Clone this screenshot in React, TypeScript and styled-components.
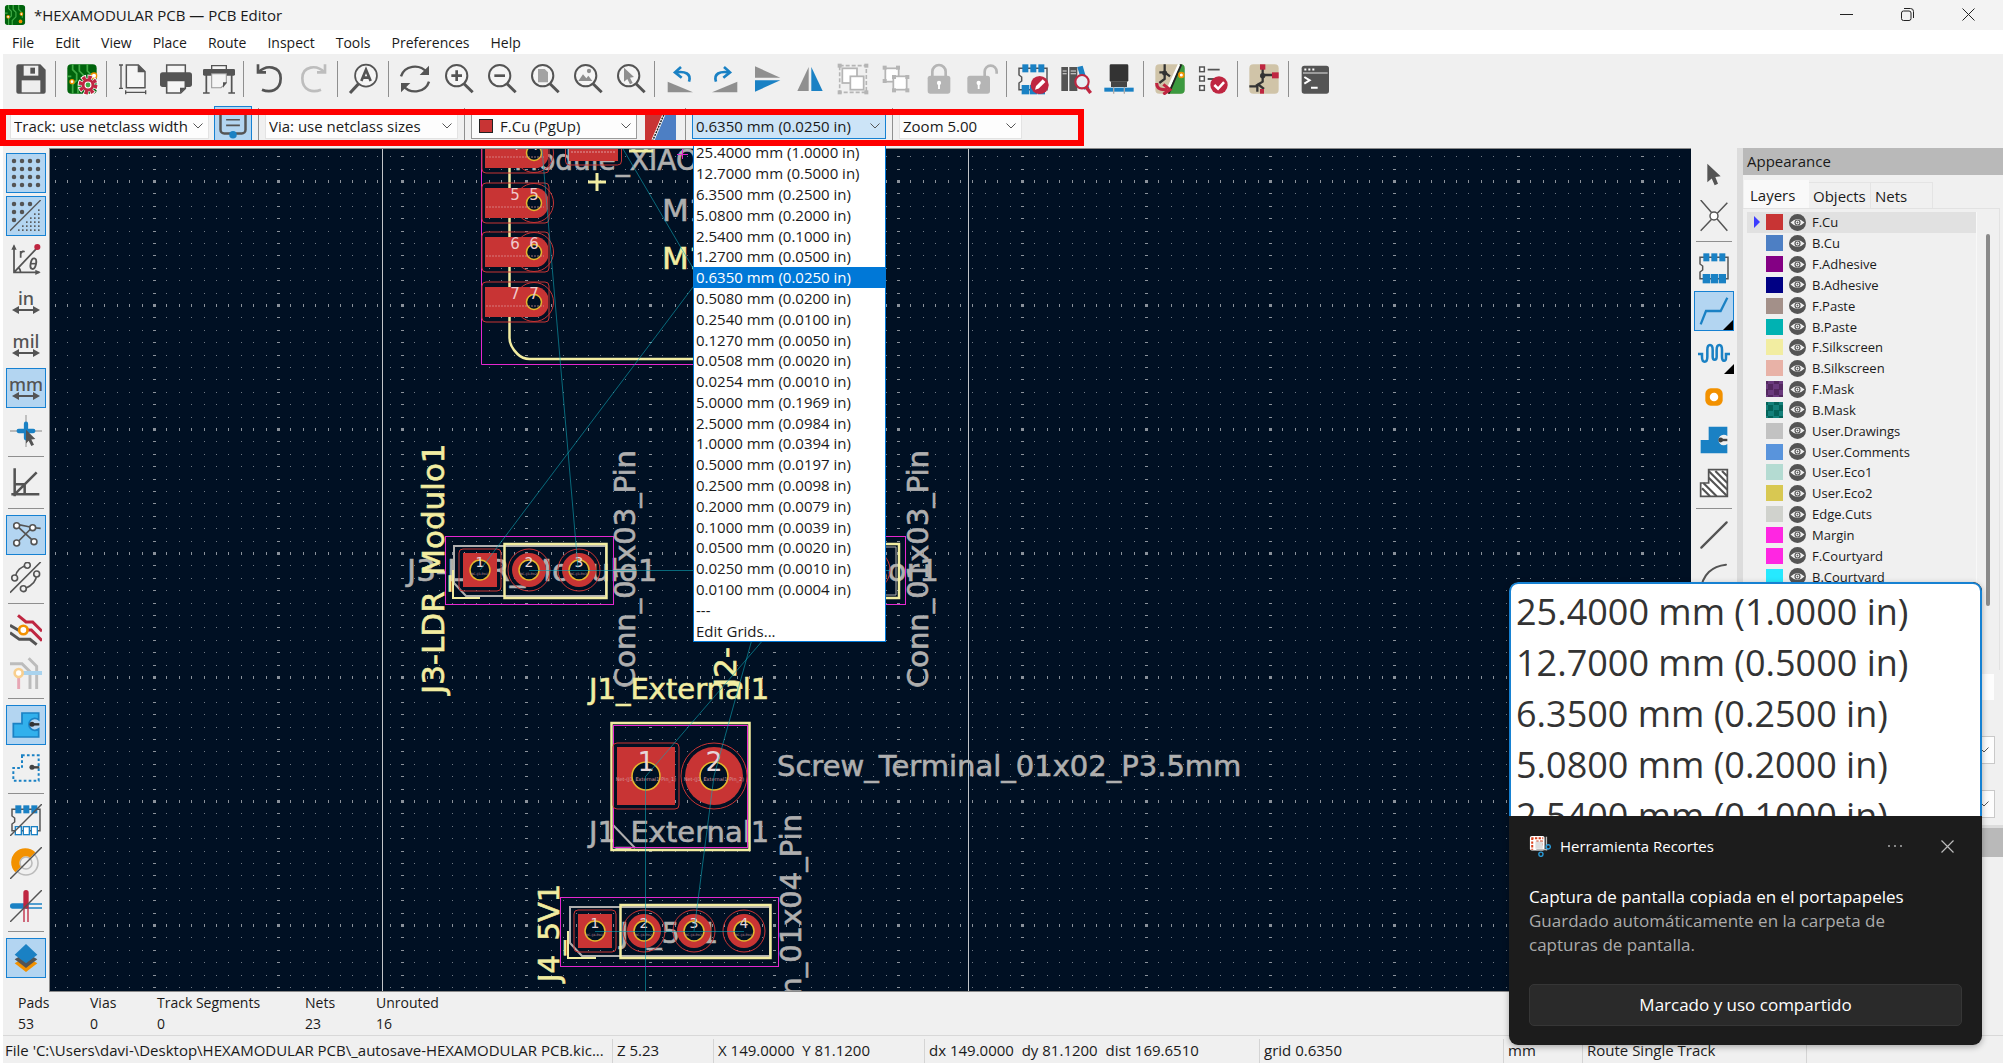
import React from 'react';
import styled, { createGlobalStyle, css } from 'styled-components';

const GlobalStyle = createGlobalStyle`
  * { box-sizing: border-box; }
  html, body { margin: 0; padding: 0; }
  body {
    font-family: 'Open Sans', 'Noto Sans', 'Liberation Sans', sans-serif;
    font-size: 15px;
    color: #1a1a1a;
    background: #fff;
    overflow: hidden;
  }
  button, select, input { font: inherit; color: inherit; }
`;

const BLUE = '#1a81c4';
const INK = '#545454';
const RED = '#bf2641';
const ORANGE = '#f29100';

/* ---------- icons (24 unit grid) ---------- */

const s = { fill: 'none', stroke: INK, strokeWidth: 1.5 } as const;

const mag = (
  <>
    <circle cx="11" cy="9.5" r="8" {...s} strokeWidth={1.5} fill="#f5f5f5" />
    <path d="M16.5 15.5L23 22" {...s} strokeWidth={2.2} />
  </>
);

const board = (
  <>
    <rect x="1" y="1" width="22" height="22" rx="3" fill="#00630c" />
    <path d="M5 1v4l3 3v5l-3 3v7M10 1v5l3 3v5l-4 4v5M16 1v5l4 4v5M1 10h3" fill="none" stroke="#3faa45" strokeWidth="1.3" />
    <circle cx="4.500" cy="14" r="2" fill={ORANGE} /><circle cx="4.500" cy="14" r="1" fill="#fff" />
  </>
);

const footprint = (top: string) => (
  <>
    <path d="M3 4H1.500v5l2 1.500v3L1.500 15v5H22.500V4z" {...s} strokeWidth={1.1} />
    {[4, 10, 16].map((x) => (
      <React.Fragment key={x}>
        <rect x={x} y="1" width="4.500" height="6" fill={BLUE} />
        <rect x={x} y="17" width="4.500" height="6" fill={top} stroke={BLUE} strokeWidth="1" />
      </React.Fragment>
    ))}
  </>
);

const lshape = 'M8 2H22V9A4 4 0 1 0 22 15V22H2V12H8z';

const icons: Record<string, React.ReactNode> = {
  app: (
    <>
      {board}
      <circle cx="19" cy="11" r="2" fill={ORANGE} /><circle cx="19" cy="11" r=".9" fill="#fff" />
      <circle cx="18" cy="19" r="2" fill={ORANGE} />
    </>
  ),
  save: (
    <>
      <path d="M1 2.500a1.500 1.500 0 0 1 1.500-1.500H19l4 4v16.500a1.500 1.500 0 0 1-1.500 1.500h-19A1.500 1.500 0 0 1 1 21.500z" fill={INK} />
      <rect x="6.500" y="2" width="11" height="7.500" fill="#eee" />
      <rect x="11.500" y="3.500" width="3.500" height="4.500" fill={INK} />
      <rect x="5" y="13" width="14" height="9" fill="#eee" />
    </>
  ),
  boardSetup: (
    <>
      {board}
      <circle cx="21" cy="9.500" r="2" fill="#fff" stroke={ORANGE} />
      <circle cx="16.500" cy="16.500" r="5" fill="#fff" />
      <circle cx="16.500" cy="16.500" r="5.800" fill="none" stroke="#fff" strokeWidth="4" strokeDasharray="3.600 .955" strokeDashoffset=".5" />
      <circle cx="16.500" cy="16.500" r="5.800" fill="none" stroke={RED} strokeWidth="2.600" strokeDasharray="2.600 1.955" />
      <circle cx="16.500" cy="16.500" r="3.700" fill="none" stroke={RED} strokeWidth="2.200" />
      <circle cx="16.500" cy="16.500" r="1.800" fill="#3faa45" />
    </>
  ),
  page: (
    <>
      <path d="M7 1.500h9l5 5V18.500H7z" fill="#f5f5f5" stroke={INK} strokeWidth="1.100" />
      <path d="M15.500 1.500v5.500h5.500z" fill={INK} />
      <path d="M3 1v18M1.500 1.500h3M1.500 19h3M6 22h16M6.500 20.500v3M21.500 20.500v3" {...s} strokeWidth={1} />
    </>
  ),
  print: (
    <>
      <rect x="5" y="1.500" width="14" height="7" fill="#f5f5f5" stroke={INK} strokeWidth="1.100" />
      <rect x="0" y="7" width="24" height="11" rx="2" fill={INK} />
      <path d="M5 13h14v6l-3.500 3.500H5z" fill="#f5f5f5" stroke={INK} strokeWidth="1.200" />
      <path d="M19 18.500l-4 4v-4z" fill={INK} />
    </>
  ),
  plot: (
    <>
      <path d="M6.500 2h11v3h-11z" fill="#f5f5f5" stroke={INK} strokeWidth="1" />
      <rect x="0" y="4.500" width="24" height="5" rx="1" fill={INK} />
      <path d="M2.500 9v13M21.500 9v13M0 22.500h5M19 22.500h5" {...s} strokeWidth={1.300} />
      <path d="M6.500 8h11v7l-4 3.500h-7z" fill="#f5f5f5" stroke="#999" strokeWidth=".8" />
      <path d="M18 14.500h-3v4z" fill={INK} />
    </>
  ),
  undo: <path d="M3 1v6h6M3.500 7C9 1 20 2 20 11.500S12 22.500 6 20" {...s} strokeWidth={2} />,
  redo: <path d="M21 1v6h-6M20.500 7C15 1 4 2 4 11.500S12 22.500 18 20" {...s} stroke="#bdbdbd" strokeWidth={2} />,
  find: (
    <>
      <circle cx="13.500" cy="9.500" r="8.200" fill="#f5f5f5" stroke={INK} strokeWidth="1.300" />
      <path d="M8 15.500L1.500 22.500" {...s} strokeWidth={2.300} />
      <path d="M10 13.500L13.500 5l3.500 8.500M11 11h5" {...s} strokeWidth={2} />
    </>
  ),
  refresh: (
    <>
      <path d="M1.500 10C4 2 15 0 21 7M22.500 14C20 22 9 24 3 17" {...s} strokeWidth={1.800} />
      <path d="M22.500 2v7h-7z M1.500 22v-7h7z" fill={INK} />
    </>
  ),
  zoomIn: <>{mag}<path d="M11 5.500v8M7 9.500h8" {...s} strokeWidth={2} /></>,
  zoomOut: <>{mag}<path d="M7 9.500h8" {...s} strokeWidth={2} /></>,
  zoomPage: <>{mag}<path d="M7.500 4.500h5l2.500 2.500v7.500H7.500z" fill="#a3a3a3" /></>,
  zoomObj: <>{mag}<path d="M5.500 13.500l3.500-5 2.500 3 1.500-2 3 4z" fill="#8f8f8f" /><circle cx="13.500" cy="6" r="1.600" fill="#8f8f8f" /></>,
  zoomSel: <>{mag}<path d="M7.500 3.500l7.500 7-3 .5 2 4-2 1-2-4-2.500 2z" fill="#8f8f8f" /></>,
  ccw: (
    <>
      <path d="M2 22V14l19 8z" fill="#8f8f8f" />
      <path d="M18 14C20 8 15 6 8.500 7" fill="none" stroke={BLUE} strokeWidth="2" />
      <path d="M12 3L7.500 7l5 4" fill="none" stroke={BLUE} strokeWidth="2" />
    </>
  ),
  cw: (
    <>
      <path d="M22 22V14L3 22z" fill="#8f8f8f" />
      <path d="M6 14C4 8 9 6 15.500 7" fill="none" stroke={BLUE} strokeWidth="2" />
      <path d="M12 3l4.500 4-5 4" fill="none" stroke={BLUE} strokeWidth="2" />
    </>
  ),
  flipV: <><path d="M3 2.500v8.500h19z" fill="#8f8f8f" /><path d="M3 21.500V13h19z" fill={BLUE} /></>,
  flipH: <><path d="M2.500 21H11V3z" fill="#8f8f8f" /><path d="M21.500 21H13V3z" fill={BLUE} /></>,
  group: (
    <>
      <rect x="2" y="2" width="20" height="20" fill="none" stroke="#b5b5b5" strokeWidth="1.200" strokeDasharray="3 1.500" />
      {[[0.5, 0.5], [20.5, 0.5], [0.5, 20.5], [20.5, 20.5]].map(([x, y]) => <rect key={`${x}${y}`} x={x} y={y} width="3" height="3" fill="#b5b5b5" />)}
      <rect x="4" y="4" width="11" height="11" fill="#fff" stroke="#b5b5b5" strokeWidth="1.300" />
      <rect x="10" y="10" width="10" height="10" fill="#fff" stroke="#b5b5b5" strokeWidth="1.300" />
    </>
  ),
  ungroup: (
    <>
      <rect x="4" y="4" width="10" height="10" fill="#fff" stroke="#b5b5b5" strokeWidth="1.300" />
      <rect x="10" y="10" width="10" height="10" fill="#fff" stroke="#b5b5b5" strokeWidth="1.300" />
      {[[2, 2], [12, 2], [2, 12], [19, 9], [9, 19], [19, 19], [9, 9]].map(([x, y]) => <rect key={`${x}-${y}`} x={x} y={y} width="3" height="3" fill="#b5b5b5" />)}
    </>
  ),
  lock: (
    <>
      <path d="M7 10V6.500a5 5 0 0 1 10 0V10" fill="none" stroke="#b5b5b5" strokeWidth="2" />
      <rect x="3.500" y="9.500" width="17" height="13.500" rx="2" fill="#b5b5b5" />
      <path d="M12 14.500v5" stroke="#fff" strokeWidth="1.400" /><circle cx="12" cy="15" r="1.600" fill="#fff" />
    </>
  ),
  unlock: (
    <>
      <path d="M14 10V6.500a4.500 4.500 0 0 1 9 0V8" fill="none" stroke="#b5b5b5" strokeWidth="2" />
      <rect x="1" y="9.500" width="17" height="13.500" rx="2" fill="#b5b5b5" />
      <path d="M9.500 14.500v5" stroke="#fff" strokeWidth="1.400" /><circle cx="9.500" cy="15" r="1.600" fill="#fff" />
    </>
  ),
  fpEdit: (
    <>
      {footprint(BLUE)}
      <circle cx="17" cy="16.500" r="6.800" fill={RED} />
      <path d="M13.500 20l.8-2.800 5-5 2 2-5 5z" fill="#fff" />
    </>
  ),
  library: (
    <>
      <path d="M1 3h5v18H1zM7 3h6v18H7z" fill={INK} />
      <path d="M2 6h3M2 8h3M8 6h4M8 8h4" stroke="#ddd" strokeWidth=".8" />
      <path d="M13 3l4-1 5 17-4 1z" fill={BLUE} />
      <circle cx="16.500" cy="14" r="5" fill="#e6eef5" stroke={RED} strokeWidth="1.600" />
      <path d="M19.500 18l3.500 4.500" stroke={RED} strokeWidth="2.600" />
    </>
  ),
  mill: (
    <>
      <rect x="5" y="1" width="14" height="13" rx="1" fill="#333" />
      <rect x="6" y="14" width="12" height="4" fill="#444" />
      <rect x="1" y="18.500" width="22" height="3" fill={BLUE} />
      <path d="M8 18v5M16 18v5" stroke="#aaa" strokeWidth="1" />
    </>
  ),
  update: (
    <>
      <rect x="1" y="1" width="22" height="22" rx="3" fill="#d0c4a8" />
      <path d="M23 4v16a3 3 0 0 1-3 3H10L19 1h1a3 3 0 0 1 3 3z" fill="#3c9a40" />
      <path d="M8 1v7M4 7h4l4 3M8 7v5l-4 3" {...s} stroke="#333" strokeWidth={1.700} /><circle cx="8" cy="7.500" r="1.900" fill="#333" />
      <path d="M19 1L9 23" stroke="#fff" strokeWidth="2.200" /><path d="M20.500 1L11 23" stroke="#222" strokeWidth="1.400" />
      <circle cx="20.500" cy="9" r="1.800" fill="#fff" stroke={ORANGE} strokeWidth="1.300" />
      <path d="M2 15c0 5 4 5 8 5M7 16l5 4-5 3.500" fill="none" stroke={RED} strokeWidth="2.300" />
    </>
  ),
  drc: (
    <>
      {[3, 10, 17].map((y) => <rect key={y} x="2" y={y} width="3.500" height="3.500" fill="#fff" stroke={INK} strokeWidth="1.100" />)}
      <path d="M8 5h9M8 12h6" {...s} strokeWidth={1.4} />
      <circle cx="16.500" cy="16.500" r="6.500" fill={RED} />
      <path d="M13 16.500l2.800 2.800 4.500-5" fill="none" stroke="#fff" strokeWidth="1.900" />
    </>
  ),
  schematic: (
    <>
      <rect x="1" y="1" width="22" height="22" rx="3" fill="#d0c4a8" />
      <path d="M11 3v6M11 9h9M11 9v5l-5 3M1 17.500h6v4M7 15.500l5 4" fill="none" stroke="#333" strokeWidth="1.700" />
      <circle cx="11" cy="9.500" r="2" fill="#333" />
      <rect x="9" y="1" width="4" height="4" fill={RED} /><rect x="18" y="7" width="5" height="4.500" fill={RED} /><rect x="9" y="19.500" width="3" height="3.500" fill={RED} />
    </>
  ),
  console: (
    <>
      <rect x="2" y="2" width="20.500" height="21" rx="2" fill={INK} />
      <path d="M3 7.500h18.500" stroke="#ddd" strokeWidth=".8" />
      <path d="M4 4.800h1.500M7 4.800h1.500M10 4.800h1.500" stroke="#fff" strokeWidth="1.500" />
      <path d="M4 10.500l4 2.500-4 2.500M9 18.500h5" fill="none" stroke="#fff" strokeWidth="1.500" />
    </>
  ),
  grid: <>{[3, 9, 15, 21].map((x) => [3, 9, 15, 21].map((y) => <circle key={`${x}${y}`} cx={x} cy={y} r="1.700" fill={INK} />))}</>,
  gridFade: (
    <>
      {[[3, 3], [9, 3], [15, 3], [3, 9], [9, 9], [3, 15]].map(([x, y]) => <circle key={`${x}${y}`} cx={x} cy={y} r="1.700" fill={INK} />)}
      <path d="M0 23L23 0" {...s} strokeWidth={1} />
      {[[21, 7], [18, 10], [21, 10], [15, 13], [18, 13], [21, 13], [12, 16], [15, 16], [18, 16], [21, 16], [9, 19], [12, 19], [15, 19], [18, 19], [21, 19], [6, 22], [9, 22], [12, 22], [15, 22], [18, 22], [21, 22]].map(([x, y]) => <rect key={`${x}.${y}`} x={x} y={y} width="1.200" height="1.200" fill={INK} />)}
    </>
  ),
  polar: (
    <>
      <path d="M3 2v20h19M3 22L20 4M8 22a6 6 0 0 0-2-4" {...s} strokeWidth={1.3} />
      <path d="M1 5l2-4 2 4zM19 20l4 2-4 2z" fill={INK} />
      <circle cx="20.500" cy="3" r="2.300" fill={RED} />
      <path d="M8 11V6M8 8c1-2 2-2 3-1.500" {...s} strokeWidth={1.300} />
      <ellipse cx="17.500" cy="15.500" rx="2" ry="4" transform="rotate(12 17.500 15.500)" {...s} strokeWidth={1.4} /><path d="M15.500 15.500h4" {...s} strokeWidth={1.2} />
    </>
  ),
  cursor: (
    <>
      <path d="M12 0v24M0 12h24" stroke="#a9a9a9" strokeWidth="1" />
      <path d="M12 6.500v11M6.500 12h11" stroke={BLUE} strokeWidth="3.200" strokeLinecap="round" />
      <path d="M12 11l7 7-3 .3 2 4-2 1-2-4-2 2z" fill={INK} />
    </>
  ),
  angle: <path d="M3.500 1v21M1 20.500h21M3.500 20.500L20 4M4 13h7v7" {...s} strokeWidth={1.900} />,
  rats: (
    <>
      <path d="M4 4c6 0 10 3 19 3M4 4l14 13M5 18L17 6" {...s} strokeWidth={1.300} />
      {[[5, 5], [17, 6.5], [5, 18], [18, 17]].map(([x, y]) => <circle key={`${x}${y}`} cx={x} cy={y} r="2.200" fill="#fff" stroke={INK} strokeWidth="1.200" />)}
    </>
  ),
  curved: (
    <>
      <path d="M0 23L23 0M4 11C5 6 8 4 13 2M20 9c0 6-4 9-9 11" {...s} strokeWidth={1.200} />
      {[[3.5, 12], [13, 2.5], [20, 9], [10, 20]].map(([x, y]) => <circle key={`${x}${y}`} cx={x} cy={y} r="2.200" fill="#f0f0f0" stroke={INK} strokeWidth="1.200" />)}
    </>
  ),
  netHi: (
    <>
      <path d="M0 8.500l7 4M0 14l7 5h8l5 4" {...s} strokeWidth={2.200} />
      <path d="M6 1l6 5h5l7 7M10 12h6l8 8" fill="none" stroke={RED} strokeWidth="2.200" />
      <circle cx="10" cy="12" r="3.200" fill="#fff" stroke={ORANGE} strokeWidth="2" />
    </>
  ),
  dim: (
    <>
      <path d="M0 5h9l6 6v13M14 1l6 6v17" fill="none" stroke="#bcbcbc" strokeWidth="2.200" />
      <path d="M7 12h17" stroke="#a9d3ee" strokeWidth="3" /><path d="M6.500 13v11" stroke="#e7a6b4" strokeWidth="2.200" />
      <circle cx="6.500" cy="12" r="3" fill="#fff" stroke="#f8cf8e" strokeWidth="2" />
    </>
  ),
  zoneFill: (
    <>
      <path d="M9 3H21.500V8A4.500 4.500 0 1 0 21.500 15V21H2.500V11H9z" fill="#31b0ec" stroke={BLUE} strokeWidth="1.300" />
      <path d="M15 11.500h7" stroke="#333" strokeWidth="1.800" /><circle cx="16.500" cy="11.500" r="1.900" fill="#333" />
    </>
  ),
  zoneOutline: (
    <>
      <path d="M9 2.500H21.500V21.500H2.500V12H9z" fill="none" stroke={BLUE} strokeWidth="1.500" strokeDasharray="2 1.700" />
      <path d="M15 11.500h7" stroke="#444" strokeWidth="1.800" /><circle cx="16.500" cy="11.500" r="1.900" fill="#444" />
    </>
  ),
  padSketch: <>{footprint('#fff')}<path d="M0 24L24 0" {...s} strokeWidth={1.100} /></>,
  viaSketch: (
    <>
      <circle cx="12" cy="12" r="9" fill="none" stroke="#bbb" strokeWidth="1.200" /><circle cx="12" cy="12" r="4.500" fill="none" stroke="#bbb" strokeWidth="1.200" />
      <path d="M4 19A10 10 0 0 1 19 4L15 8a5 5 0 0 0-7 7z" fill={ORANGE} />
      <path d="M0 24L24 0" {...s} strokeWidth={1.100} />
    </>
  ),
  trackSketch: (
    <>
      <path d="M2 12h10" stroke={BLUE} strokeWidth="4" strokeLinecap="round" /><path d="M12 10.500h12M12 13.500h12" stroke={BLUE} strokeWidth="1" />
      <path d="M12 2v10" stroke={RED} strokeWidth="4" strokeLinecap="round" /><path d="M10.500 13v11M13.500 13v11" stroke={RED} strokeWidth="1" />
      <path d="M0 24L24 0" {...s} strokeWidth={1.100} />
    </>
  ),
  layers: (
    <>
      <path d="M3.500 16l8.500 6.500 8.500-6.500-8.500-5z" fill={ORANGE} /><path d="M3.500 13l8.500 6.500 8.500-6.500-8.500-5z" fill={INK} /><path d="M3.500 9.500l8.500-8 8.500 8-8.500 6.500z" fill={BLUE} />
    </>
  ),
  arrow: <path d="M7 5l10 9.500-4 .5 2 5-2.500 1.200-2.200-5L7 19z" fill={INK} />,
  cross: <><path d="M2 0l20 23M22 2L2 23" {...s} strokeWidth={1.100} /><circle cx="12" cy="12" r="3" fill="#fff" stroke={INK} strokeWidth="1.100" /></>,
  footprint: footprint(BLUE),
  track: <path d="M2 22l4-10h11l5-10" fill="none" stroke={BLUE} strokeWidth="1.700" />,
  tune: <path d="M0 12h3v2c0 5 4 5 4 0V9c0-5 4-5 4 0v5c0 3 3 3 3 0V9c0-5 4-5 4 0v5c0 4 3 4 3 1v-3h3" fill="none" stroke={BLUE} strokeWidth="1.900" />,
  via: <><rect x="5.500" y="5.500" width="13" height="13" rx="4" fill={ORANGE} /><circle cx="12" cy="12" r="3.200" fill="#fff" /></>,
  zone: <><path d={lshape} fill={BLUE} /><path d="M17 12h5" stroke="#444" strokeWidth="1.800" /><circle cx="17" cy="12" r="1.800" fill="#444" /></>,
  hatch: (
    <>
      <path d="M8 2H22V22H2V12H8z" fill="#fff" stroke={INK} strokeWidth="1.300" />
      <path d="M8 3l14 14M8 8l14 14M13 3l9 9M18 3l4 4M4 12l10 10M3 16l6 6" {...s} strokeWidth={1.600} />
    </>
  ),
  line: <path d="M2.500 21.500l19-19" {...s} strokeWidth={1.700} strokeLinecap="round" />,
  arc: <path d="M2 22C3 9 11 3 21 2" {...s} strokeWidth={1.500} strokeLinecap="round" />,
  netclass: (
    <>
      <path d="M2 0v15a3 3 0 0 0 3 3h14a3 3 0 0 0 3-3V0" fill="none" stroke={INK} strokeWidth="2" />
      <path d="M6.500 7h11M6.500 11.500h11" {...s} strokeWidth={1.300} /><circle cx="12" cy="19" r="3" fill={BLUE} />
    </>
  ),
  snip: (
    <>
      <rect x="1" y="1" width="16" height="16" rx="2" fill="#fff" />
      <path d="M2.500 3.500h13M3.500 3v13M8 7h6v6H8" fill="none" stroke="#d8401c" strokeWidth="2.200" strokeDasharray="2.500 1.500" />
      <rect x="7" y="7" width="8" height="8" fill="#ddd" />
      <path d="M19 2v15M8 16h12" stroke="#bbb" strokeWidth="1.500" />
      <circle cx="21" cy="13" r="2.300" fill="none" stroke="#2a9bd8" strokeWidth="1.500" /><circle cx="13" cy="21" r="2.300" fill="none" stroke="#2a9bd8" strokeWidth="1.500" />
    </>
  ),
};

const Glyph = ({ name, size = 32 }: { name: string; size?: number }) => (
  <svg width={size} height={size} viewBox="0 0 24 24" aria-hidden="true">{icons[name]}</svg>
);

/* ---------- window frame ---------- */

const Window = styled.div`
  position: relative;
  display: grid;
  grid-template-rows: 30px 24px 54px 40px minmax(0, 1fr) 43px 28px;
  height: 100vh;
`;

const TitleBar = styled.header`
  display: flex;
  align-items: center;
  gap: 8px;
  padding: 0 8px 0 4px;
  background: #f3f3f3;
`;

const Title = styled.h1`
  flex: 1;
  margin: 0;
  font-size: 15px;
  font-weight: 400;
  line-height: 20px;
`;

const WindowButton = styled.button`
  width: 53px;
  height: 30px;
  padding: 0;
  border: 0;
  background: none;
`;

const MenuBar = styled.nav`
  display: flex;
  align-items: center;
  gap: 21px;
  padding: 2px 0 0 12px;
  background: #fff;
`;

const MenuItem = styled.button`
  padding: 0;
  border: 0;
  background: none;
  font-size: 14px;
  line-height: 20px;
`;

const ToolRow = styled.div`
  display: flex;
  align-items: center;
  margin-left: 3px;
  padding: 0 0 4px 6px;
  background: #f0f0f0;
`;

const OptionRow = styled.div`
  display: flex;
  align-items: center;
  margin-left: 3px;
  padding: 0 0 5px 7px;
  background: #f0f0f0;
`;

const ToolButton = styled.button`
  display: grid;
  place-items: center;
  width: 43px;
  height: 40px;
  padding: 0;
  border: 0;
  background: none;
`;

const ToolDivider = styled.span`
  width: 1px;
  height: 36px;
  margin: 0 4px 0 3px;
  background: #8f8f8f;
`;

const OptionDivider = styled.span`
  width: 1px;
  height: 36px;
  margin: 0 6px;
  background: #8f8f8f;
`;

const activeStyle = css`
  border: 1px solid #1681d2;
  background: #b3d5f1;
`;

const ToggleButton = styled.button`
  display: grid;
  place-items: center;
  width: 38px;
  height: 40px;
  margin-left: 5px;
  padding: 0;
  ${activeStyle}
`;

const Combo = styled.label<{ $width: number; $open?: boolean; $outlined?: boolean }>`
  display: flex;
  align-items: center;
  width: ${(p) => p.$width}px;
  height: 26px;
  padding: 0 4px 0 3px;
  background: ${(p) => (p.$open ? '#cce4f7' : '#fdfdfd')};
  border: 1px solid ${(p) => (p.$open ? '#1681d2' : p.$outlined ? '#9a9a9a' : '#e3e3e3')};
`;

const ComboSelect = styled.select`
  flex: 1;
  min-width: 0;
  padding: 0;
  border: 0;
  outline: 0;
  appearance: none;
  background: none;
  font-size: 15px;
  line-height: 20px;
`;

const ColorChip = styled.span`
  width: 14px;
  height: 14px;
  margin: 0 7px 0 4px;
  border: 1px solid #222;
  background: #c83434;
`;

const LayerPair = styled.button`
  width: 31px;
  height: 28px;
  margin: 0 3px 0 8px;
  padding: 0;
  border: 0;
  background: none;
`;

const Chevron = () => (
  <svg width="12" height="8" viewBox="0 0 12 8" aria-hidden="true"><path d="M1.500 1.500l4.500 4.500 4.500-4.500" fill="none" stroke="#555" /></svg>
);

const Highlight = styled.div`
  position: absolute;
  top: 109px;
  left: 0;
  width: 1084px;
  height: 37px;
  border: 6px solid #f00;
  pointer-events: none;
`;

const GridMenu = styled.ul`
  position: absolute;
  top: 141px;
  left: 693px;
  display: grid;
  grid-auto-rows: 1fr;
  width: 193px;
  height: 501px;
  margin: 0;
  padding: 0;
  list-style: none;
  border: 1px solid #0078d7;
  background: #fff;
`;

const GridItem = styled.li<{ $selected: boolean }>`
  display: flex;
  align-items: center;
  padding-left: 2px;
  line-height: 20px;
  white-space: nowrap;
  color: ${(p) => (p.$selected ? '#fff' : '#1a1a1a')};
  background: ${(p) => (p.$selected ? '#0078d7' : 'transparent')};
`;

/* ---------- work area ---------- */

const Work = styled.main`
  display: grid;
  grid-template-columns: 46px minmax(0, 1fr) 46px 6px 260px;
  margin-left: 3px;
  background: #f0f0f0;
`;

const SideBar = styled.div`
  display: flex;
  flex-direction: column;
  align-items: center;
  gap: 3px;
  padding-top: 5px;
  overflow: hidden;
`;

const SideButton = styled.button<{ $active?: boolean }>`
  position: relative;
  display: grid;
  flex: none;
  place-items: center;
  width: 40px;
  height: 40px;
  padding: 0;
  border: 0;
  background: none;
  ${(p) => p.$active && activeStyle}
`;

const SideDivider = styled.span`
  flex: none;
  width: 36px;
  height: 1px;
  margin: 2px 0 3px;
  background: #8f8f8f;
`;

const UnitLabel = styled.span`
  display: flex;
  flex-direction: column;
  align-items: center;
  font-family: 'Noto Sans', sans-serif;
  font-size: 18px;
  font-weight: 500;
  line-height: 16px;
  color: #545454;
`;

const Corner = styled.span`
  position: absolute;
  right: 0;
  bottom: 0;
  border: 5px solid #000;
  border-top-color: transparent;
  border-left-color: transparent;
`;

const Board = styled.section`
  min-width: 0;
  overflow: hidden;
  border: solid #8a8a8a;
  border-width: 1px 0 1px 1px;
  background: #001023;
`;

const Sash = styled.div`
  background: #dcdcdc;
`;

/* ---------- appearance panel ---------- */

const Panel = styled.aside`
  display: flex;
  flex-direction: column;
  min-height: 0;
  overflow: hidden;
`;

const PanelTitle = styled.h2`
  flex: none;
  height: 27px;
  margin: 0;
  padding-left: 4px;
  background: #b9b9b9;
  font-size: 15px;
  font-weight: 400;
  line-height: 26px;
`;

const Tabs = styled.div`
  display: flex;
  align-items: flex-end;
  height: 33px;
  padding-left: 1px;
`;

const Tab = styled.button<{ $current?: boolean }>`
  width: ${(p) => (p.$current ? 65 : 62)}px;
  height: ${(p) => (p.$current ? 28 : 26)}px;
  padding: 0 0 0 ${(p) => (p.$current ? 6 : 4)}px;
  border: 1px solid ${(p) => (p.$current ? '#f9f9f9' : '#e4e4e4')};
  border-width: 1px 1px 0 0;
  background: ${(p) => (p.$current ? '#f9f9f9' : '#f0f0f0')};
  font-size: 15px;
  line-height: 20px;
  text-align: left;
`;

const TabBody = styled.div`
  display: flex;
  height: 462px;
  margin-right: 3px;
  padding: 3px 0 0 4px;
  border: solid #e2e2e2;
  border-width: 1px 1px 0 0;
`;

const LayerList = styled.ul`
  display: grid;
  flex: 1;
  grid-auto-rows: 1fr;
  height: 375px;
  margin: 0;
  padding: 0;
  list-style: none;
`;

const LayerRow = styled.li<{ $current: boolean }>`
  display: grid;
  grid-template-columns: 13px 17px 17px 1fr;
  column-gap: 6px;
  align-items: center;
  font-size: 13px;
  line-height: 18px;
  background: ${(p) => (p.$current ? '#e1e1e1' : 'transparent')};
`;

const Swatch = styled.span<{ $color: string; $mixed?: string }>`
  width: 17px;
  height: 16px;
  background: ${(p) => (p.$mixed ? `repeating-conic-gradient(${p.$color} 0 25%, ${p.$mixed} 0 50%) 2px 3px / 11px 11px` : p.$color)};
`;

const ScrollTrack = styled.div`
  width: 23px;
  padding: 22px 0 0 9px;
  border-left: 1px solid #f8f8f8;
`;

const ScrollThumb = styled.div`
  width: 4px;
  height: 372px;
  border-radius: 2px;
  background: #8a8a8a;
`;

const DisplayField = styled.input`
  flex: none;
  height: 26px;
  margin: 4px 9px 0 4px;
  border: 0;
  background: #fdfdfd;
`;

const PresetGroup = styled.div`
  display: flex;
  flex-direction: column;
  gap: 26px;
  padding: 36px 8px 7px 4px;
`;

const PresetCombo = styled.label`
  display: flex;
  align-items: center;
  height: 28px;
  padding-right: 4px;
  border: 1px solid #c9c9c9;
  background: #fdfdfd;
`;

const SelectionTitle = styled.div`
  flex: none;
  height: 32px;
  border-top: 3px solid #dcdcdc;
  background: #b9b9b9;
`;

/* ---------- bottom bars ---------- */

const BoardStats = styled.dl`
  display: flex;
  margin: 0 0 0 3px;
  padding: 0 0 0 15px;
  background: #f0f0f0;
`;

const Stat = styled.div<{ $width: number }>`
  width: ${(p) => p.$width}px;
  font-size: 14px;
  line-height: 21px;
  dt, dd { margin: 0; }
`;

const StatusBar = styled.footer`
  display: flex;
  margin-left: 3px;
  padding-top: 3px;
  border-top: 1px solid #d8d8d8;
  background: #f0f0f0;
`;

const StatusCell = styled.span<{ $width: number }>`
  width: ${(p) => p.$width}px;
  padding-left: 4px;
  border-right: 1px solid #d4d4d4;
  overflow: hidden;
  line-height: 22px;
  white-space: pre;
  text-overflow: ellipsis;
  &:first-child { padding-left: 2px; }
`;

/* ---------- notification ---------- */

const Toast = styled.div`
  position: absolute;
  right: 21px;
  bottom: 18px;
  width: 473px;
  overflow: hidden;
  border-radius: 9px;
  background: #1c1c1c;
  color: #fff;
  box-shadow: 0 2px 6px rgba(0, 0, 0, 0.3);
`;

const Preview = styled.div`
  height: 234px;
  overflow: hidden;
  padding: 2px 0 0 5px;
  border: 2px solid #1681d2;
  border-bottom: 0;
  border-radius: 9px 9px 0 0;
  background: #fff;
  color: #333;
  font-size: 36px;
  line-height: 51px;
  white-space: nowrap;
`;

const ToastBody = styled.div`
  display: flex;
  flex-direction: column;
  padding: 18px 20px 19px;
`;

const ToastHead = styled.div`
  display: flex;
  align-items: center;
  height: 24px;
  margin-bottom: 27px;
  line-height: 20px;
`;

const ToastApp = styled.span`
  flex: 1;
  margin-left: 9px;
`;

const ToastIconButton = styled.button`
  display: grid;
  place-items: center;
  width: 24px;
  height: 24px;
  margin: 0 3px 0 25px;
  padding: 0;
  border: 0;
  background: none;
`;

const ToastText = styled.p<{ $muted?: boolean }>`
  margin: 0;
  padding-right: 48px;
  font-size: 17px;
  line-height: 24px;
  color: ${(p) => (p.$muted ? '#ababab' : '#fff')};
  white-space: ${(p) => (p.$muted ? 'normal' : 'nowrap')};
`;

const ToastAction = styled.button`
  height: 42px;
  margin-top: 27px;
  border: 1px solid #363636;
  border-radius: 5px;
  background: #2a2a2a;
  font-size: 17px;
  line-height: 24px;
`;

/* ---------- data ---------- */

const grids = [
  '25.4000 mm (1.0000 in)', '12.7000 mm (0.5000 in)', '6.3500 mm (0.2500 in)', '5.0800 mm (0.2000 in)',
  '2.5400 mm (0.1000 in)', '1.2700 mm (0.0500 in)', '0.6350 mm (0.0250 in)', '0.5080 mm (0.0200 in)',
  '0.2540 mm (0.0100 in)', '0.1270 mm (0.0050 in)', '0.0508 mm (0.0020 in)', '0.0254 mm (0.0010 in)',
  '5.0000 mm (0.1969 in)', '2.5000 mm (0.0984 in)', '1.0000 mm (0.0394 in)', '0.5000 mm (0.0197 in)',
  '0.2500 mm (0.0098 in)', '0.2000 mm (0.0079 in)', '0.1000 mm (0.0039 in)', '0.0500 mm (0.0020 in)',
  '0.0250 mm (0.0010 in)', '0.0100 mm (0.0004 in)', '---', 'Edit Grids...',
];

const layers: [string, string, string?][] = [
  ['F.Cu', '#c83434'], ['B.Cu', '#4d7fc4'], ['F.Adhesive', '#840084'], ['B.Adhesive', '#000084'],
  ['F.Paste', '#a39089'], ['B.Paste', '#00b2b2'], ['F.Silkscreen', '#f2eda1'], ['B.Silkscreen', '#e8b2a7'],
  ['F.Mask', '#6a3a7d', '#53285f'], ['B.Mask', '#14807a', '#046359'], ['User.Drawings', '#c2c2c2'], ['User.Comments', '#5994dc'],
  ['User.Eco1', '#b4dbd2'], ['User.Eco2', '#d8c852'], ['Edge.Cuts', '#d0d2cd'], ['Margin', '#ff26e2'],
  ['F.Courtyard', '#ff26e2'], ['B.Courtyard', '#26e9ff'],
];

const toolbar = [
  'save', '|', 'boardSetup', '|', 'page', 'print', 'plot', '|', 'undo', 'redo', '|', 'find', '|',
  'refresh', 'zoomIn', 'zoomOut', 'zoomPage', 'zoomObj', 'zoomSel', '|',
  'ccw', 'cw', 'flipV', 'flipH', 'group', 'ungroup', 'lock', 'unlock', '|',
  'fpEdit', 'library', 'mill', '|', 'update', 'drc', '|', 'schematic', '|', 'console',
];

const leftTools = [
  'grid*', 'gridFade*', 'polar', 'in', 'mil', 'mm*', 'cursor', '|', 'angle', '|', 'rats*', 'curved', '|',
  'netHi', 'dim', '|', 'zoneFill*', 'zoneOutline', '|', 'padSketch', 'viaSketch', 'trackSketch', '|', 'layers*',
];

const rightTools = ['arrow', 'cross', '|', 'footprint', 'track*', 'tune', 'via', 'zone', 'hatch', '|', 'line', 'arc'];

const menus = ['File', 'Edit', 'View', 'Place', 'Route', 'Inspect', 'Tools', 'Preferences', 'Help'];

/* ---------- board drawing ---------- */

const BG = '#001023';
const SILK = '#f2eda1';
const FAB = '#afafaf';
const COPPER = '#c83434';
const COURT = '#e628d0';
const HOLE = '#e3b72e';

const BoardSvg = styled.svg`
  display: block;
  text { font-family: 'DejaVu Sans', sans-serif; }
`;

const Label = ({ x, y, t, c = FAB, size = 29, up = false, end = false }: { x: number; y: number; t: string; c?: string; size?: number; up?: boolean; end?: boolean }) => (
  <text x={x} y={y} fill={c} stroke={c} strokeWidth=".6" fontSize={size} textAnchor={end ? 'end' : 'start'} transform={up ? `rotate(-90 ${x} ${y})` : undefined}>{t}</text>
);

const Pad = ({ x, y, n, square = false, r = 17, hole = 10, gap = 4, font = 14, net }: { x: number; y: number; n: string; square?: boolean; r?: number; hole?: number; gap?: number; font?: number; net: string }) => (
  <g>
    {square ? (
      <>
        <rect x={x - r} y={y - r} width={2 * r} height={2 * r} fill={COPPER} />
        <rect x={x - r - gap} y={y - r - gap} width={2 * (r + gap)} height={2 * (r + gap)} rx="4" fill="none" stroke={COPPER} />
      </>
    ) : (
      <>
        <circle cx={x} cy={y} r={r} fill={COPPER} />
        <circle cx={x} cy={y} r={r + gap} fill="none" stroke={COPPER} />
      </>
    )}
    <circle cx={x} cy={y} r={hole} fill={BG} stroke={HOLE} strokeWidth="1.500" />
    <text x={x} y={y - hole / 2 + 2} fontSize={font} fill="#e6d5d8" textAnchor="middle">{n}</text>
    <text x={x} y={y + 5} fontSize={net.length > 12 ? 5 : 3} fill="#d59aa0" textAnchor="middle">{net}</text>
  </g>
);

const EdgePad = ({ y, n }: { y: number; n: string }) => (
  <g>
    <path d={`M485 ${y - 15}h53a15 15 0 0 1 10 9v12a15 15 0 0 1-10 9h-53z`} fill={COPPER} />
    <rect x="482" y={y - 20} width="67" height="40" rx="4" fill="none" stroke={COPPER} />
    <circle cx="534" cy={y} r="19.500" fill="none" stroke={COPPER} />
    <circle cx="534" cy={y} r="7.500" fill={BG} stroke={HOLE} strokeWidth="1.500" />
    <text x="515" y={y - 3} fontSize="15" fill="#efc9cb" textAnchor="middle">{n}</text>
    <text x="534" y={y - 3} fontSize="15" fill="#efc9cb" textAnchor="middle">{n}</text>
    <path d={`M486 ${y + 4}h58`} stroke="#e09a9c" strokeWidth="1" strokeDasharray="2 1" opacity=".7" />
  </g>
);

const steps = Array.from({ length: 10 }, (_, i) => Math.round(i * 12.4));

const BoardDrawing = () => (
  <BoardSvg width="100%" height="100%" role="img" aria-label="PCB layout">
    <defs>
      <pattern id="dots" x="401" y="180" width="124" height="124" patternUnits="userSpaceOnUse">
        {steps.map((x, i) => steps.map((y, j) => (
          <rect key={`${x}-${y}`} x={i === 0 ? x : x + 1} y={j === 0 ? y : y + 1} width={i === 0 ? 3 : 1} height={j === 0 ? 3 : 1} fill={i === 0 || j === 0 ? '#8b929b' : '#717a85'} shapeRendering="crispEdges" />
        )))}
      </pattern>
    </defs>
    <g transform="translate(-50 -149)">
      <rect x="50" y="149" width="100%" height="100%" fill="url(#dots)" />
      <path d="M382.500 149V1000M968.500 149V1000" stroke="#c3c6ca" strokeWidth="1" />

      <Label x={514} y={170} t="Module_XIAO" size={28} />
      <Label x={662} y={221} t="M1" size={31} />
      <Label x={662} y={269} t="M1" c={SILK} size={31} />
      <path d="M481.500 149V364.500H800" fill="none" stroke={COURT} />
      <path d="M509.500 149V338q0 8 8 16q5 5 12 5H800" fill="none" stroke={SILK} strokeWidth="2.500" />
      <path d="M597 173v18M588 182h18M629 151h24" stroke={SILK} strokeWidth="3" />
      <path d="M682.500 149v10M677 154.500h11" stroke={COURT} />
      {['4', '5', '6', '7'].map((n, i) => <EdgePad key={n} n={n} y={153 + Math.round(i * 49.7)} />)}
      <rect x="569" y="140" width="49" height="21" fill={COPPER} />
      <rect x="565.500" y="130" width="56" height="35" rx="4" fill="none" stroke={COPPER} />
      <path d="M571 152h44" stroke="#e09a9c" strokeDasharray="2 1" />

      <Label x={407} y={581} t="J3-LDR_Modulo1" size={31} />
      <rect x="445.500" y="536.500" width="168" height="68" fill="none" stroke={COURT} />
      <path d="M454 546H606V596H466L454 583z" fill="none" stroke={FAB} strokeWidth="2" />
      <rect x="504.500" y="544" width="102" height="54" fill="none" stroke={SILK} strokeWidth="2.500" />
      <path d="M453 570V598H480" fill="none" stroke={SILK} strokeWidth="2" />
      <Pad x={480} y={570} n="1" square net="NC-(J3-Pin1)" />
      <Pad x={529} y={570} n="2" net="NC-(J3-Pin2)" />
      <Pad x={579} y={570} n="3" net="NC-(J3-Pin3)" />
      <Label x={444} y={694} t="J3-LDR_Modulo1" c={SILK} size={31} up />
      <Label x={635} y={688} t="Conn_01x03_Pin" up />

      <Label x={939} y={581} t="J2-Sensor1" size={31} end />
      <rect x="738.500" y="536.500" width="167" height="68" fill="none" stroke={COURT} />
      <rect x="797" y="544" width="102" height="54" fill="none" stroke={SILK} strokeWidth="2.500" />
      <path d="M800 547H896V595H800z" fill="none" stroke={FAB} />
      <Pad x={869} y={570} n="3" net="" />
      <Label x={736} y={687} t="J2-" c={SILK} size={31} up />
      <Label x={928} y={688} t="Conn_01x03_Pin" up />

      <Label x={589} y={699} t="J1_External1" c={SILK} />
      <Label x={589} y={842} t="J1_External1" />
      <path d="M613 825L635 848" stroke={FAB} strokeWidth="2" />
      <rect x="611.500" y="723" width="138" height="127" fill="none" stroke={SILK} strokeWidth="2.500" />
      <rect x="613.500" y="725.500" width="134" height="122" fill="none" stroke={COURT} />
      <Pad x={646} y={776} n="1" square r={29} hole={14} font={27} net="Net-(J1_External1-Pin_1)" />
      <Pad x={714} y={776} n="2" r={29} hole={14} font={27} net="Net-(J1_External1-Pin_2)" />
      <Label x={777} y={776} t="Screw_Terminal_01x02_P3.5mm" />

      <Label x={620} y={943} t="J4_5V1" />
      <rect x="560.500" y="897.500" width="218" height="69" fill="none" stroke={COURT} />
      <path d="M570 907H770V956H582L570 943z" fill="none" stroke={FAB} strokeWidth="2" />
      <rect x="620.500" y="905" width="150" height="53" fill="none" stroke={SILK} strokeWidth="2.500" />
      <path d="M568 931V958H596" fill="none" stroke={SILK} strokeWidth="2" />
      <Pad x={595} y={931} n="1" square net="NC-(J4-Pin1)" />
      <Pad x={644} y={931} n="2" net="NC-(J4-Pin2)" />
      <Pad x={694} y={931} n="3" net="NC-(J4-Pin3)" />
      <Pad x={744} y={931} n="4" net="NC-(J4-Pin4)" />
      <Label x={559} y={982} t="J4_5V1" c={SILK} up />
      <Label x={801} y={1052} t="Conn_01x04_Pin" up />

      <g fill="none" stroke="#0da5b5" strokeWidth="1" opacity=".6">
        <path d="M542 149L578 568M623 149L740 348M480 570L760 198M529 570.500H890M770 632L646 776M754 632L714 776L694 931M645.500 776V1000M595 931.500H744" />
      </g>
    </g>
  </BoardSvg>
);

const Eye = () => (
  <svg width="17" height="17" viewBox="0 0 17 17" aria-hidden="true">
    <circle cx="8.500" cy="8.500" r="8.500" fill="#545454" />
    <path d="M1.500 8.500Q8.500 1.500 15.500 8.500Q8.500 15.500 1.500 8.500z" fill="#f0f0f0" />
    <circle cx="8.500" cy="8.500" r="2.500" fill="#fff" stroke="#545454" strokeWidth="1.200" />
    <circle cx="8.500" cy="8.500" r="1" fill="#545454" />
  </svg>
);

const unitNames = ['in', 'mil', 'mm'];

const SideTools = ({ items }: { items: string[] }) => (
  <SideBar role="toolbar">
    {items.map((raw, i) => {
      if (raw === '|') return <SideDivider key={i} />;
      const active = raw.endsWith('*');
      const name = raw.replace('*', '');
      return (
        <SideButton key={name} $active={active} aria-label={name}>
          {unitNames.includes(name) ? (
            <UnitLabel>
              {name}
              <svg width="28" height="8" viewBox="0 0 28 8"><path d="M4 4h20" stroke={INK} strokeWidth="2" /><path d="M0 4l7-4v8zM28 4l-7-4v8z" fill={INK} /></svg>
            </UnitLabel>
          ) : <Glyph name={name} />}
          {(name === 'track' || name === 'tune') && <Corner />}
        </SideButton>
      );
    })}
  </SideBar>
);

const App = () => (
  <>
    <GlobalStyle />
    <Window>
      <TitleBar>
        <Glyph name="app" size={22} />
        <Title>*HEXAMODULAR PCB — PCB Editor</Title>
        <WindowButton aria-label="Minimize"><svg width="13" height="13"><path d="M0 6.500h13" stroke="#222" /></svg></WindowButton>
        <WindowButton aria-label="Restore"><svg width="13" height="13" fill="none" stroke="#222"><rect x=".5" y="3" width="9.500" height="9.500" rx="2" /><path d="M3 .5h6.500a3 3 0 0 1 3 3V10" /></svg></WindowButton>
        <WindowButton aria-label="Close"><svg width="13" height="13"><path d="M.5.5l12 12M12.500.5l-12 12" stroke="#222" /></svg></WindowButton>
      </TitleBar>

      <MenuBar>{menus.map((m) => <MenuItem key={m}>{m}</MenuItem>)}</MenuBar>

      <ToolRow role="toolbar">
        {toolbar.map((t, i) => (t === '|' ? <ToolDivider key={i} /> : <ToolButton key={t} aria-label={t}><Glyph name={t} /></ToolButton>))}
      </ToolRow>

      <OptionRow>
        <Combo $width={199}><ComboSelect aria-label="Track width"><option>Track: use netclass width</option></ComboSelect><Chevron /></Combo>
        <ToggleButton aria-label="Use existing track width"><Glyph name="netclass" size={30} /></ToggleButton>
        <OptionDivider />
        <Combo $width={193}><ComboSelect aria-label="Via size"><option>Via: use netclass sizes</option></ComboSelect><Chevron /></Combo>
        <OptionDivider />
        <Combo $width={166} $outlined><ColorChip /><ComboSelect aria-label="Active layer"><option>F.Cu (PgUp)</option></ComboSelect><Chevron /></Combo>
        <LayerPair aria-label="Layer pair">
          <svg width="31" height="28"><path d="M0 0h20L8 28H0z" fill="#c83434" /><path d="M20 0h11v28H8z" fill="#4d7fc4" /><path d="M20 0L8 28" stroke="#fff" strokeWidth="3" /><path d="M20 0L8 28" stroke="#222" strokeWidth="1.500" strokeDasharray="2 1" /></svg>
        </LayerPair>
        <OptionDivider />
        <Combo $width={194} $open><ComboSelect aria-label="Grid"><option>0.6350 mm (0.0250 in)</option></ComboSelect><Chevron /></Combo>
        <OptionDivider />
        <Combo $width={123}><ComboSelect aria-label="Zoom"><option>Zoom 5.00</option></ComboSelect><Chevron /></Combo>
      </OptionRow>

      <Work>
        <SideTools items={leftTools} />
        <Board><BoardDrawing /></Board>
        <SideTools items={rightTools} />
        <Sash />
        <Panel>
          <PanelTitle>Appearance</PanelTitle>
          <Tabs role="tablist">
            <Tab role="tab" $current>Layers</Tab>
            <Tab role="tab">Objects</Tab>
            <Tab role="tab">Nets</Tab>
          </Tabs>
          <TabBody>
            <LayerList>
              {layers.map(([name, color, mixed], i) => (
                <LayerRow key={name} $current={i === 0}>
                  {i === 0 ? <svg width="13" height="12"><path d="M7 0l6 6-6 6z" fill="#3d3dff" /></svg> : <span />}
                  <Swatch $color={color} $mixed={mixed} />
                  <Eye />
                  <span>{name}</span>
                </LayerRow>
              ))}
            </LayerList>
            <ScrollTrack><ScrollThumb /></ScrollTrack>
          </TabBody>
          <DisplayField aria-label="Layer display options" />
          <PresetGroup>
            <PresetCombo><ComboSelect aria-label="Presets"><option> </option></ComboSelect><Chevron /></PresetCombo>
            <PresetCombo><ComboSelect aria-label="Viewports"><option> </option></ComboSelect><Chevron /></PresetCombo>
          </PresetGroup>
          <SelectionTitle />
        </Panel>
      </Work>

      <BoardStats>
        <Stat $width={72}><dt>Pads</dt><dd>53</dd></Stat>
        <Stat $width={67}><dt>Vias</dt><dd>0</dd></Stat>
        <Stat $width={148}><dt>Track Segments</dt><dd>0</dd></Stat>
        <Stat $width={71}><dt>Nets</dt><dd>23</dd></Stat>
        <Stat $width={90}><dt>Unrouted</dt><dd>16</dd></Stat>
      </BoardStats>

      <StatusBar>
        <StatusCell $width={610}>{"File 'C:\\Users\\davi-\\Desktop\\HEXAMODULAR PCB\\_autosave-HEXAMODULAR PCB.kic..."}</StatusCell>
        <StatusCell $width={101}>Z 5.23</StatusCell>
        <StatusCell $width={211}>{'X 149.0000  Y 81.1200'}</StatusCell>
        <StatusCell $width={335}>{'dx 149.0000  dy 81.1200  dist 169.6510'}</StatusCell>
        <StatusCell $width={244}>grid 0.6350</StatusCell>
        <StatusCell $width={79}>mm</StatusCell>
        <StatusCell $width={224}>Route Single Track</StatusCell>
      </StatusBar>

      <GridMenu role="listbox" aria-label="Grid sizes">
        {grids.map((g, i) => <GridItem key={g} role="option" aria-selected={i === 6} $selected={i === 6}>{g}</GridItem>)}
      </GridMenu>
      <Highlight />

      <Toast role="status">
        <Preview>{grids.slice(0, 5).map((g) => <div key={g}>{g}</div>)}</Preview>
        <ToastBody>
          <ToastHead>
            <Glyph name="snip" size={22} />
            <ToastApp>Herramienta Recortes</ToastApp>
            <ToastIconButton aria-label="Opciones"><svg width="16" height="4" fill="#aaa"><circle cx="2" cy="2" r="1" /><circle cx="8" cy="2" r="1" /><circle cx="14" cy="2" r="1" /></svg></ToastIconButton>
            <ToastIconButton aria-label="Cerrar"><svg width="13" height="13"><path d="M.5.5l12 12M12.500.5l-12 12" stroke="#bbb" strokeWidth="1.200" /></svg></ToastIconButton>
          </ToastHead>
          <ToastText>Captura de pantalla copiada en el portapapeles</ToastText>
          <ToastText $muted>Guardado automáticamente en la carpeta de capturas de pantalla.</ToastText>
          <ToastAction>Marcado y uso compartido</ToastAction>
        </ToastBody>
      </Toast>
    </Window>
  </>
);

export default App;
